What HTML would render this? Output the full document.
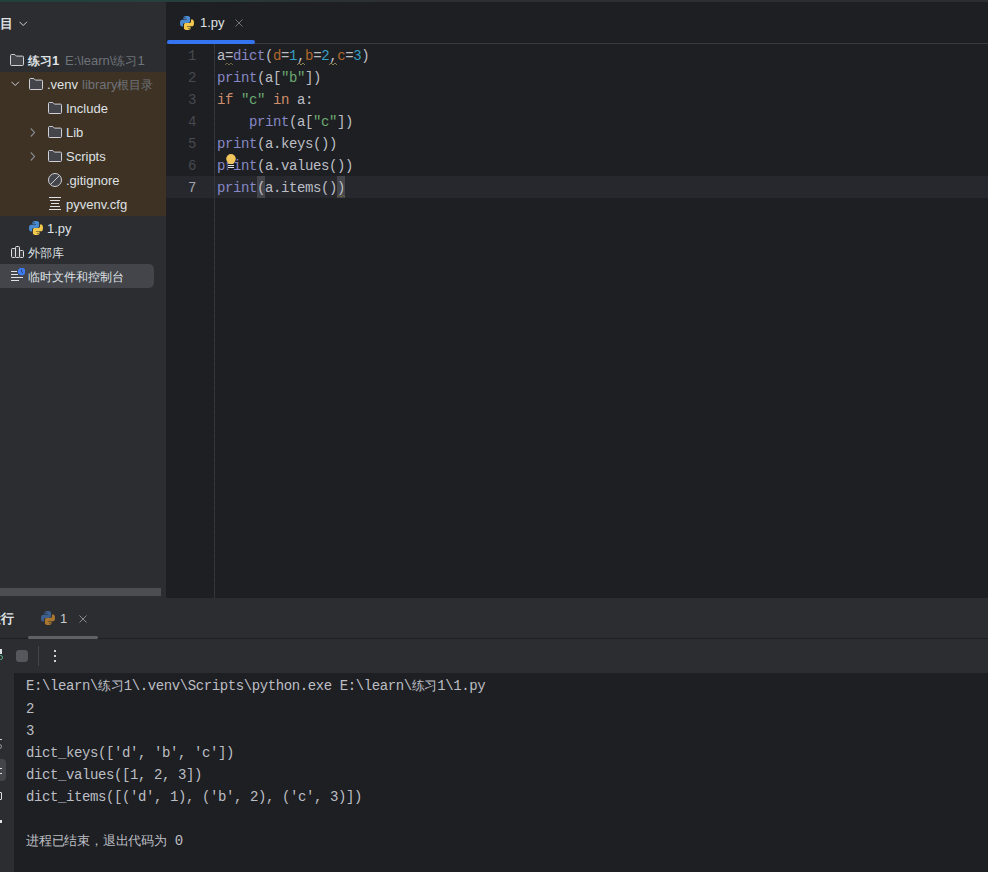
<!DOCTYPE html>
<html><head><meta charset="utf-8">
<style>
*{margin:0;padding:0;box-sizing:border-box}
html,body{width:988px;height:872px;overflow:hidden;background:#1E1F22}
body{position:relative;font-family:"Liberation Sans",sans-serif;font-size:13px;color:#DFE1E5}
.a{position:absolute}
.topstrip{left:0;top:0;width:988px;height:2px;background:linear-gradient(90deg,#23403D 0px,#25403E 160px,#2B3333 300px,#2D2F32 420px,#2B2D30 988px)}
#side{left:0;top:2px;width:166px;height:596px;background:#2B2D30;overflow:hidden}
.row{position:absolute;left:0;width:166px;height:24px;line-height:26px;white-space:nowrap}
.lib{background:#3D3223}
.gray{color:#6F737A}
.c12{font-size:12px}
.ico{position:absolute;width:16px;height:16px}
#editor{left:166px;top:2px;width:822px;height:596px;background:#1E1F22;overflow:hidden}
.code{font-family:"Liberation Mono",monospace;font-size:14px;letter-spacing:-0.4px;line-height:22px;white-space:pre;color:#BCBEC4}
.ln{position:absolute;left:0;width:30px;text-align:right;color:#464A51}
.cj{font-size:13px;letter-spacing:-0.2px}
.bi{color:#8888C6}
.kw{color:#CF8E6D}
.st{color:#6AAB73}
.nu{color:#369FC4}
.na{color:#B0662C}
#bottom{left:0;top:598px;width:988px;height:274px;background:#2B2D30;overflow:hidden}
#console{left:14px;top:75px;width:974px;height:199px;background:#1E1F22}
</style></head><body>
<div class="a topstrip"></div>

<!-- SIDEBAR -->
<div class="a" id="side">
  <!-- header: 项目 cut off -->
  <div class="a" style="left:-13px;top:10px;height:24px;line-height:24px;font-weight:bold;color:#DFE1E5;white-space:nowrap">项目</div>
  <svg class="a" style="left:19px;top:19px" width="9" height="6" viewBox="0 0 9 6"><path d="M0.5 0.8 L4.2 4.5 L7.9 0.8" fill="none" stroke="#CED0D6" stroke-width="1"/></svg>

  <!-- rows (side top=2, so subtract 2) -->
  <div class="row" style="top:46px">
    <svg class="ico" style="left:9px;top:4px" viewBox="0 0 16 16"><path d="M1.5 3.5a1 1 0 0 1 1-1h3.3l1.6 1.6h6.1a1 1 0 0 1 1 1v7.4a1 1 0 0 1-1 1h-11a1 1 0 0 1-1-1z" fill="#43454A" stroke="#CED0D6" stroke-width="1"/></svg>
    <span class="a" style="left:28px;font-weight:bold"><span class="c12">练习</span>1</span>
    <span class="a gray" style="left:65px">E:\learn\<span class="c12">练习</span>1</span>
  </div>
  <div class="row lib" style="top:70px">
    <svg class="a" style="left:11px;top:9px" width="9" height="6" viewBox="0 0 9 6"><path d="M0.5 0.8 L4.2 4.5 L7.9 0.8" fill="none" stroke="#CED0D6" stroke-width="1"/></svg>
    <svg class="ico" style="left:28px;top:4px" viewBox="0 0 16 16"><path d="M1.5 3.5a1 1 0 0 1 1-1h3.3l1.6 1.6h6.1a1 1 0 0 1 1 1v7.4a1 1 0 0 1-1 1h-11a1 1 0 0 1-1-1z" fill="#43454A" stroke="#CED0D6" stroke-width="1"/></svg>
    <span class="a" style="left:47px">.venv</span>
    <span class="a gray" style="left:82px">library<span class="c12">根目录</span></span>
  </div>
  <div class="row lib" style="top:94px">
    <svg class="ico" style="left:47px;top:4px" viewBox="0 0 16 16"><path d="M1.5 3.5a1 1 0 0 1 1-1h3.3l1.6 1.6h6.1a1 1 0 0 1 1 1v7.4a1 1 0 0 1-1 1h-11a1 1 0 0 1-1-1z" fill="#43454A" stroke="#CED0D6" stroke-width="1"/></svg>
    <span class="a" style="left:66px">Include</span>
  </div>
  <div class="row lib" style="top:118px">
    <svg class="a" style="left:30px;top:8px" width="6" height="9" viewBox="0 0 6 9"><path d="M0.8 0.5 L4.6 4.5 L0.8 8.5" fill="none" stroke="#868A91" stroke-width="1.1"/></svg>
    <svg class="ico" style="left:47px;top:4px" viewBox="0 0 16 16"><path d="M1.5 3.5a1 1 0 0 1 1-1h3.3l1.6 1.6h6.1a1 1 0 0 1 1 1v7.4a1 1 0 0 1-1 1h-11a1 1 0 0 1-1-1z" fill="#43454A" stroke="#CED0D6" stroke-width="1"/></svg>
    <span class="a" style="left:66px">Lib</span>
  </div>
  <div class="row lib" style="top:142px">
    <svg class="a" style="left:30px;top:8px" width="6" height="9" viewBox="0 0 6 9"><path d="M0.8 0.5 L4.6 4.5 L0.8 8.5" fill="none" stroke="#868A91" stroke-width="1.1"/></svg>
    <svg class="ico" style="left:47px;top:4px" viewBox="0 0 16 16"><path d="M1.5 3.5a1 1 0 0 1 1-1h3.3l1.6 1.6h6.1a1 1 0 0 1 1 1v7.4a1 1 0 0 1-1 1h-11a1 1 0 0 1-1-1z" fill="#43454A" stroke="#CED0D6" stroke-width="1"/></svg>
    <span class="a" style="left:66px">Scripts</span>
  </div>
  <div class="row lib" style="top:166px">
    <svg class="ico" style="left:47px;top:4px" viewBox="0 0 16 16"><circle cx="8" cy="8" r="6.5" fill="#43454A" stroke="#CED0D6" stroke-width="1"/><path d="M3.6 12.4 L12.4 3.6" stroke="#CED0D6" stroke-width="1"/></svg>
    <span class="a" style="left:66px">.gitignore</span>
  </div>
  <div class="row lib" style="top:190px">
    <svg class="ico" style="left:47px;top:4px" viewBox="0 0 16 16"><path d="M2 1.5h12M3 4.5h10M4 7.5h8M3 10.5h10M2 13.5h12" stroke="#DFE1E5" stroke-width="1"/></svg>
    <span class="a" style="left:66px">pyvenv.cfg</span>
  </div>
  <div class="row" style="top:214px">
    <svg class="ico" style="left:28px;top:4px" viewBox="0 0 16 16"><path d="M7.9 1C4.3 1 4.5 2.6 4.5 2.6V4.2h3.5v.5H3.1S1 4.5 1 8.1s1.9 3.4 1.9 3.4H4v-1.7s-.1-1.9 1.9-1.9h3.4s1.8 0 1.8-1.8V3s.3-2-3.2-2zM6 2.1a.6.6 0 1 1 0 1.2.6.6 0 0 1 0-1.2z" fill="#4A8AD0"/><path d="M8.1 15c3.6 0 3.4-1.6 3.4-1.6v-1.6H8v-.5h4.9S15 11.5 15 7.9s-1.9-3.4-1.9-3.4H12v1.7s.1 1.9-1.9 1.9H6.7S4.9 8.1 4.9 9.9V13s-.3 2 3.2 2zm1.9-1.1a.6.6 0 1 1 0-1.2.6.6 0 0 1 0 1.2z" fill="#F2C94C"/></svg>
    <span class="a" style="left:47px">1.py</span>
  </div>
  <div class="row" style="top:238px">
    <svg class="ico" style="left:9px;top:4px" viewBox="0 0 16 16"><rect x="2.5" y="4.5" width="4" height="9" rx="1" fill="#3C3E42" stroke="#DFE1E5"/><rect x="10.5" y="6.5" width="4" height="7" rx="1" fill="#3C3E42" stroke="#DFE1E5"/><rect x="6.5" y="2.5" width="4" height="11" rx="1" fill="#3C3E42" stroke="#DFE1E5"/></svg>
    <span class="a c12" style="left:28px">外部库</span>
  </div>
  <div class="a" style="left:-6px;top:262px;width:160px;height:24px;background:#43454A;border-radius:5px"></div>
  <div class="row" style="top:262px">
    <svg class="ico" style="left:9px;top:4px" viewBox="0 0 16 16"><path d="M2 3.5h6M2 6.5h7M2 9.5h12M2 12.5h8" stroke="#DFE1E5" stroke-width="1"/><circle cx="12.6" cy="3.6" r="3.7" fill="#3D7CF5"/><path d="M12.6 1.6V3.8L14 5" stroke="#25324D" stroke-width=".8" fill="none"/></svg>
    <span class="a c12" style="left:28px">临时文件和控制台</span>
  </div>
  <!-- horizontal scrollbar -->
  <div class="a" style="left:0;top:586px;width:161px;height:8px;background:#4B4D51"></div>
</div>

<!-- EDITOR -->
<div class="a" id="editor">
  <!-- tab -->
  <svg class="ico" style="left:13px;top:13px" viewBox="0 0 16 16"><path d="M7.9 1C4.3 1 4.5 2.6 4.5 2.6V4.2h3.5v.5H3.1S1 4.5 1 8.1s1.9 3.4 1.9 3.4H4v-1.7s-.1-1.9 1.9-1.9h3.4s1.8 0 1.8-1.8V3s.3-2-3.2-2zM6 2.1a.6.6 0 1 1 0 1.2.6.6 0 0 1 0-1.2z" fill="#4A8AD0"/><path d="M8.1 15c3.6 0 3.4-1.6 3.4-1.6v-1.6H8v-.5h4.9S15 11.5 15 7.9s-1.9-3.4-1.9-3.4H12v1.7s.1 1.9-1.9 1.9H6.7S4.9 8.1 4.9 9.9V13s-.3 2 3.2 2zm1.9-1.1a.6.6 0 1 1 0-1.2.6.6 0 0 1 0 1.2z" fill="#F2C94C"/></svg>
  <div class="a" style="left:34px;top:10px;line-height:22px;color:#DFE1E5">1.py</div>
  <svg class="a" style="left:69px;top:17px" width="8" height="8" viewBox="0 0 8 8"><path d="M0.5 0.5L7.5 7.5M7.5 0.5L0.5 7.5" stroke="#6F737A" stroke-width="1"/></svg>
  <div class="a" style="left:0;top:41px;width:822px;height:1px;background:#393B40"></div>
  <div class="a" style="left:1px;top:38px;width:88px;height:4px;background:#3574F0;border-radius:2px"></div>

  <!-- current line -->
  <div class="a" style="left:0;top:174px;width:822px;height:22px;background:#26282E"></div>
  <!-- gutter line -->
  <div class="a" style="left:48px;top:42px;width:1px;height:554px;background:repeating-linear-gradient(180deg,#35373B 0px,#35373B 5px,#2A2C2F 5px,#2A2C2F 6px)"></div>
  <!-- brace highlights -->
  <div class="a" style="left:91px;top:174px;width:8px;height:22px;background:#43454A"></div>
  <div class="a" style="left:171px;top:174px;width:8px;height:22px;background:#43454A"></div>

  <div class="a code" style="left:0;top:43px;width:822px">
    <div class="ln" style="top:0">1</div>
    <div class="ln" style="top:22px">2</div>
    <div class="ln" style="top:44px">3</div>
    <div class="ln" style="top:66px">4</div>
    <div class="ln" style="top:88px">5</div>
    <div class="ln" style="top:110px">6</div>
    <div class="ln" style="top:132px;color:#A1A3AB">7</div>
    <div class="a" style="left:51px;top:0">a=<span class="bi">dict</span>(<span class="na">d</span>=<span class="nu">1</span>,<span class="na">b</span>=<span class="nu">2</span>,<span class="na">c</span>=<span class="nu">3</span>)
<span class="bi">print</span>(a[<span class="st">"b"</span>])
<span class="kw">if</span> <span class="st">"c"</span> <span class="kw">in</span> a:
    <span class="bi">print</span>(a[<span class="st">"c"</span>])
<span class="bi">print</span>(a.keys())
<span class="bi">print</span>(a.values())
<span class="bi">print</span>(a.items())</div>
  </div>
  <!-- wavy underlines -->
  <svg class="a" style="left:59px;top:60px" width="8" height="4" viewBox="0 0 8 4"><path d="M0 3L2 1L4 3L6 1L8 3" fill="none" stroke="#6B6440" stroke-width="1"/></svg>
  <svg class="a" style="left:131px;top:60px" width="8" height="4" viewBox="0 0 8 4"><path d="M0 3L2 1L4 3L6 1L8 3" fill="none" stroke="#8C8050" stroke-width="1"/></svg>
  <svg class="a" style="left:163px;top:60px" width="8" height="4" viewBox="0 0 8 4"><path d="M0 3L2 1L4 3L6 1L8 3" fill="none" stroke="#8C8050" stroke-width="1"/></svg>
  <svg class="a" style="left:171px;top:192px" width="8" height="4" viewBox="0 0 8 4"><path d="M0 3L2 1L4 3L6 1L8 3" fill="none" stroke="#6B6440" stroke-width="1"/></svg>
  <!-- lightbulb -->
  <svg class="a" style="left:59px;top:151px" width="12" height="16" viewBox="0 0 12 16"><circle cx="6" cy="5.8" r="4.8" fill="#F2C55C"/><rect x="3.5" y="8" width="5" height="3" fill="#F2C55C"/><rect x="2.5" y="11" width="7" height="5" fill="#1E1F22"/><path d="M3 12.5h6M3 14.5h6" stroke="#DFE1E5" stroke-width="1"/></svg>
</div>

<!-- BOTTOM PANEL -->
<div class="a" id="bottom">
  <div class="a" style="left:-12px;top:13px;line-height:16px;font-size:12.5px;font-weight:bold;white-space:nowrap">运行</div>
  <svg class="ico" style="left:40px;top:12px" viewBox="0 0 16 16"><path d="M7.9 1C4.3 1 4.5 2.6 4.5 2.6V4.2h3.5v.5H3.1S1 4.5 1 8.1s1.9 3.4 1.9 3.4H4v-1.7s-.1-1.9 1.9-1.9h3.4s1.8 0 1.8-1.8V3s.3-2-3.2-2zM6 2.1a.6.6 0 1 1 0 1.2.6.6 0 0 1 0-1.2z" fill="#3E5F8E"/><path d="M8.1 15c3.6 0 3.4-1.6 3.4-1.6v-1.6H8v-.5h4.9S15 11.5 15 7.9s-1.9-3.4-1.9-3.4H12v1.7s.1 1.9-1.9 1.9H6.7S4.9 8.1 4.9 9.9V13s-.3 2 3.2 2zm1.9-1.1a.6.6 0 1 1 0-1.2.6.6 0 0 1 0 1.2z" fill="#A9762F"/></svg>
  <div class="a" style="left:60px;top:10px;line-height:22px;color:#C9CCD1">1</div>
  <svg class="a" style="left:79px;top:17px" width="8" height="8" viewBox="0 0 8 8"><path d="M0.5 0.5L7.5 7.5M7.5 0.5L0.5 7.5" stroke="#868A91" stroke-width="1"/></svg>
  <div class="a" style="left:0;top:40px;width:988px;height:1px;background:#1E1F22"></div>
  <div class="a" style="left:28px;top:38px;width:70px;height:3px;background:#5E6266;border-radius:2px"></div>
  <!-- toolbar -->
  <div class="a" style="left:0;top:51px;width:2px;height:5px;background:#DFE1E5"></div><div class="a" style="left:-2px;top:57px;width:5px;height:5px;border:1.3px solid #5FB88A;border-radius:50%"></div>
  <div class="a" style="left:16px;top:52px;width:12px;height:12px;background:#54575B;border-radius:3px"></div>
  <div class="a" style="left:38px;top:48px;width:1px;height:20px;background:#43454A"></div>
  <div class="a" style="left:54px;top:52px;width:2px;height:2px;background:#CED0D6"></div>
  <div class="a" style="left:54px;top:57px;width:2px;height:2px;background:#CED0D6"></div>
  <div class="a" style="left:54px;top:62px;width:2px;height:2px;background:#CED0D6"></div>

  <div class="a" style="left:0;top:141px;width:2px;height:1px;background:#CED0D6"></div>
  <div class="a" style="left:-3px;top:146px;width:5px;height:5px;border:1px solid #9AA0A6;border-radius:50%"></div>
  <div class="a" style="left:-6px;top:161px;width:12px;height:22px;background:#43454A;border-radius:4px"></div>
  <div class="a" style="left:0;top:170px;width:2px;height:6px;border-top:1px solid #DFE1E5;border-bottom:1px solid #DFE1E5"></div>
  <div class="a" style="left:-4px;top:194px;width:6px;height:8px;border:1px solid #DFE1E5;border-radius:1px"></div>
  <div class="a" style="left:0;top:222px;width:2px;height:3px;background:#DFE1E5"></div>
  <div class="a" id="console">
    <div class="a code" style="left:12px;top:2px">E:\learn\<span class="cj">练习</span>1\.venv\Scripts\python.exe E:\learn\<span class="cj">练习</span>1\1.py
2
3
dict_keys(['d', 'b', 'c'])
dict_values([1, 2, 3])
dict_items([('d', 1), ('b', 2), ('c', 3)])

<span class="cj">进程已结束，退出代码为</span> 0</div>
  </div>
</div>
</body></html>
